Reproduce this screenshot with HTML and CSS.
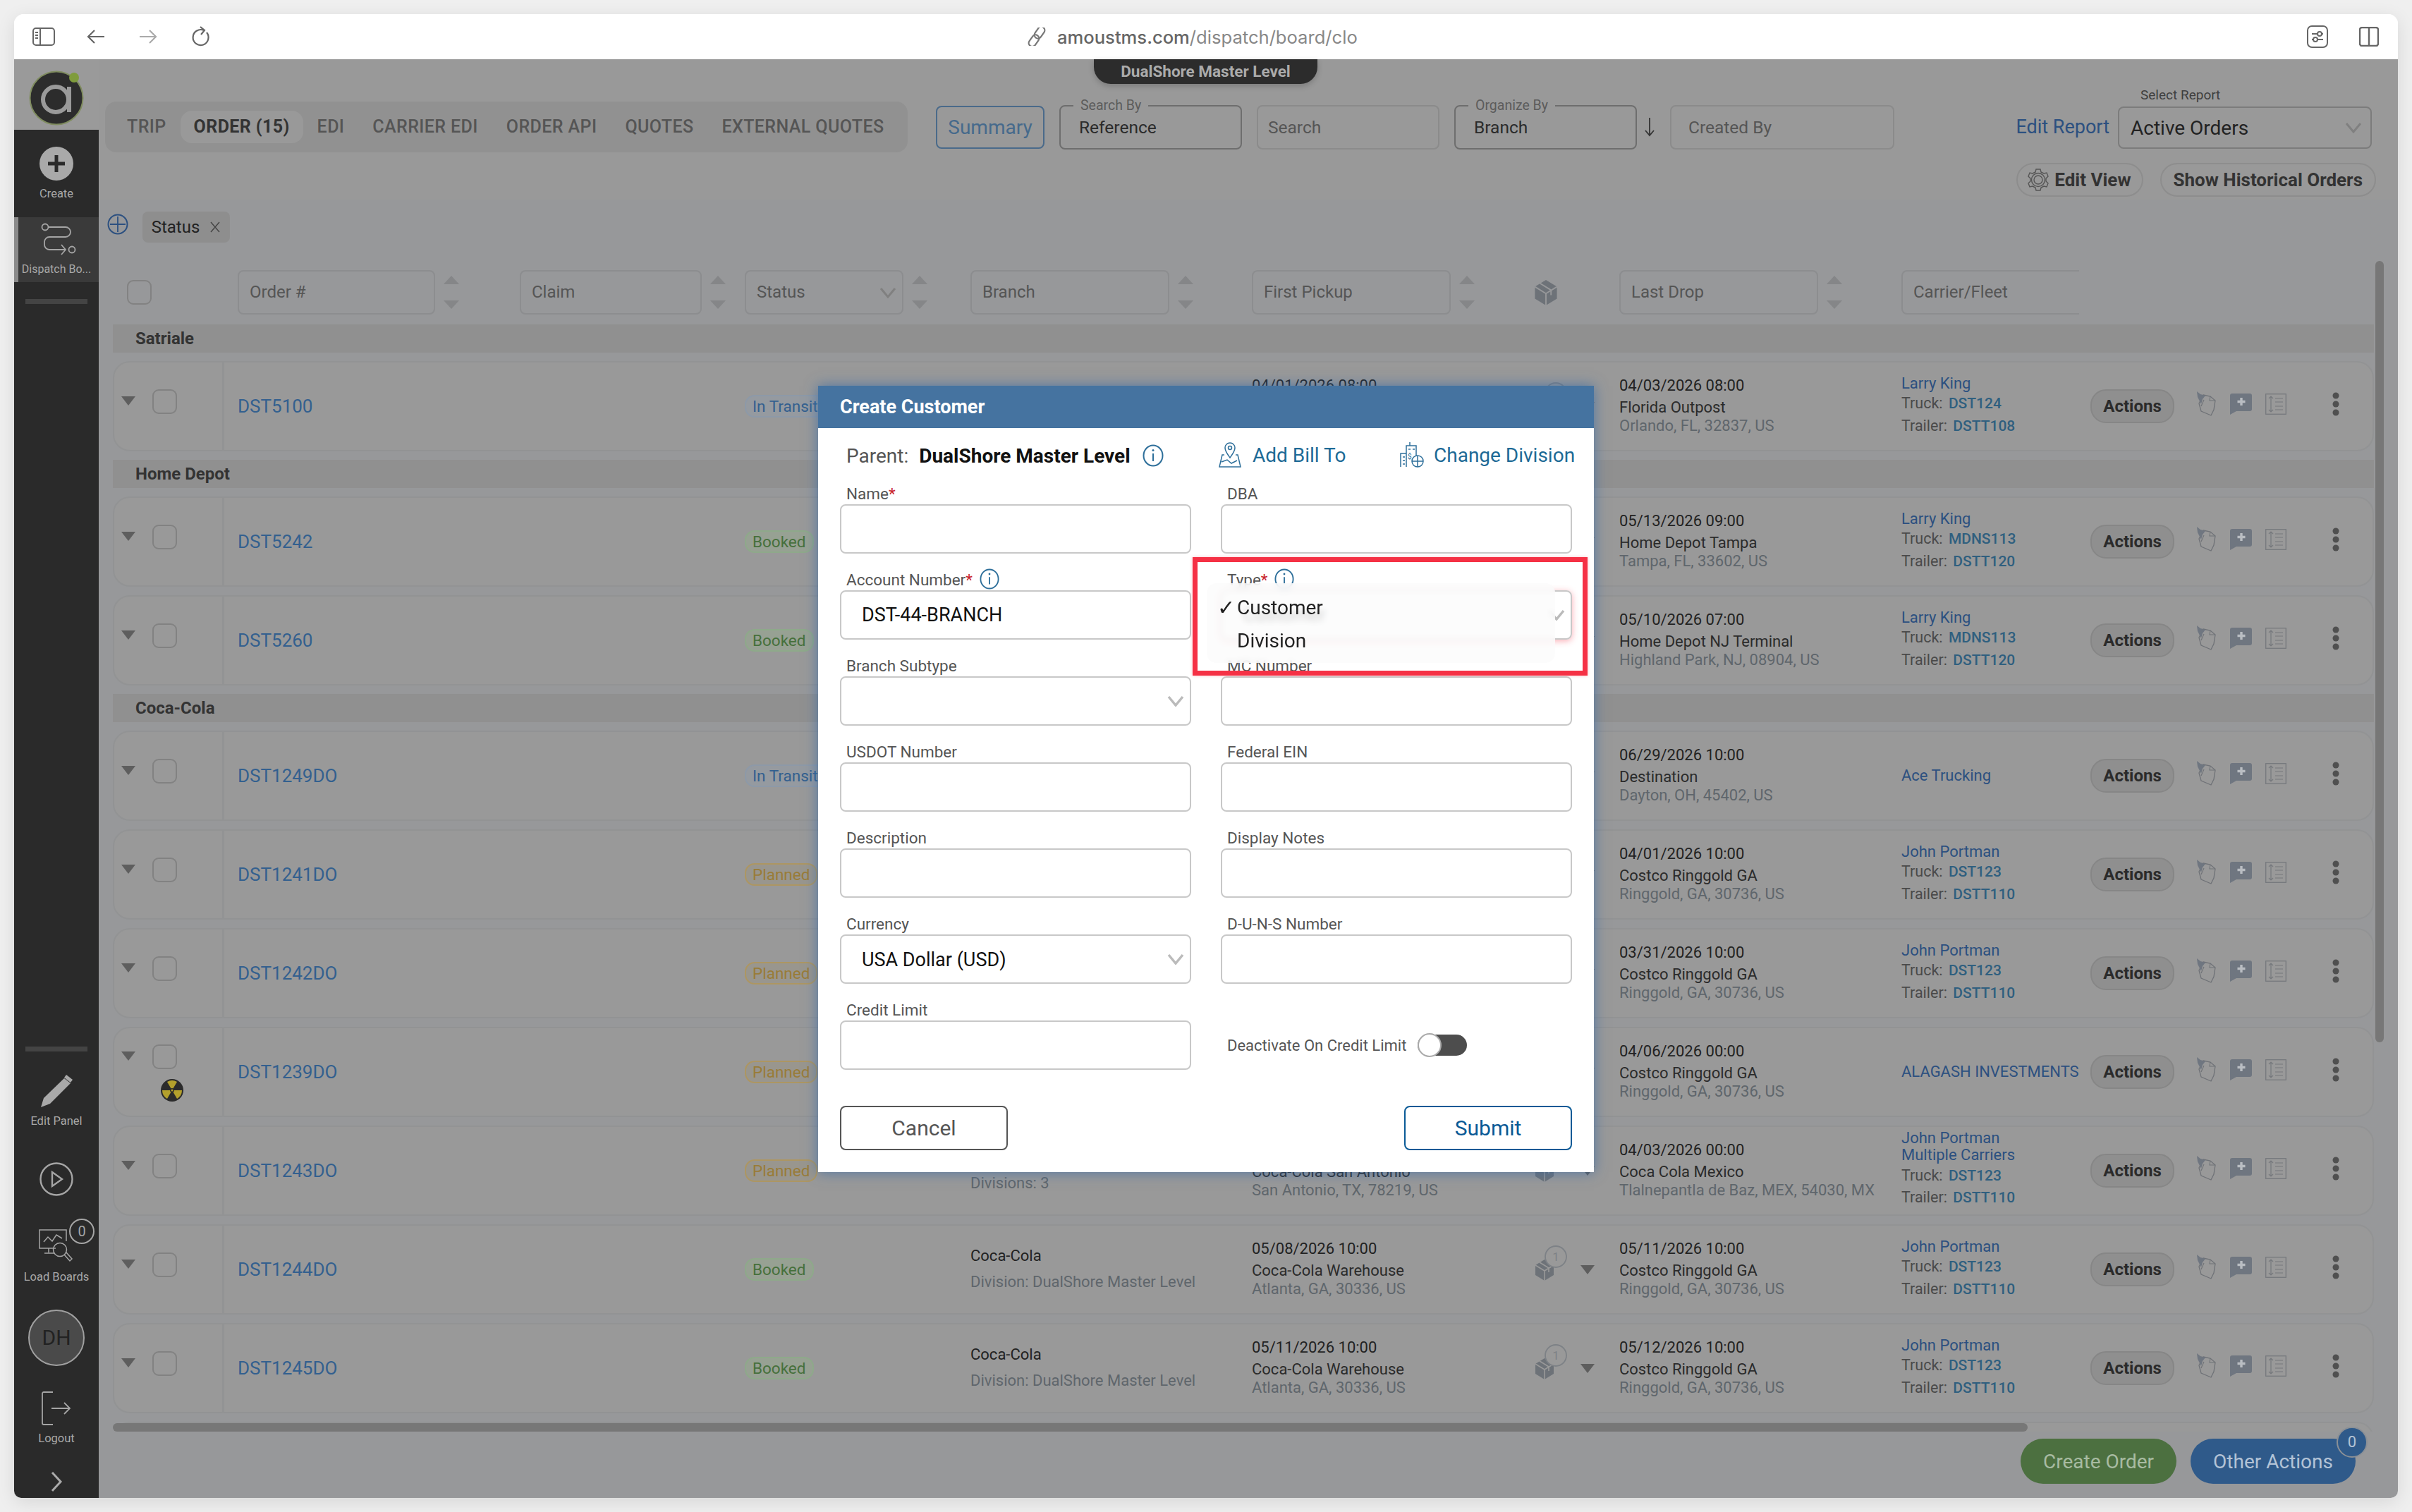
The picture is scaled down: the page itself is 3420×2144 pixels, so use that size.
FILE: index.html
```html
<!DOCTYPE html>
<html lang="en">
<head>
    <meta charset="UTF-8">
    <meta name="viewport" content="width=device-width, initial-scale=1.0">
    <title>Dispatch Board</title>
    <link rel="stylesheet" href="styles.css">
</head>
<body>
    <svg class="icon-defs" xmlns="http://www.w3.org/2000/svg">
        <symbol id="i-info" viewBox="0 0 30 32"><ellipse cx="15" cy="16" rx="13.5" ry="14.5" fill="none" stroke="currentColor" stroke-width="2"/><path d="M15 13v11" stroke="currentColor" stroke-width="2"/><circle cx="15" cy="8.5" r="1.5" fill="currentColor"/></symbol>
        <symbol id="i-pin" viewBox="0 0 28 36"><path d="M10 5l10 2 7 6-2 13-4 8-14-6-3-11z" fill="none" stroke="#6f7277" stroke-width="1.3"/><path d="M20 7l-1 6 8 0" fill="none" stroke="#6f7277" stroke-width="1.1"/><path d="M7 21l4-9" stroke="#6f7277" stroke-width="1.1"/><path d="M1 0l5 4 7 2-4 5-2 7-3-6-2-4z" fill="#6f7680"/></symbol>
        <symbol id="i-chat" viewBox="0 0 31 30"><path d="M3 0h25a3 3 0 0 1 3 3v19a3 3 0 0 1-3 3H9L0 30V3a3 3 0 0 1 3-3z" fill="#6f7680"/><path d="M16 6v11M10.5 11.5h11" stroke="#b9bdc2" stroke-width="3.4"/></symbol>
        <symbol id="i-lines" viewBox="0 0 30 30"><rect x=".7" y=".7" width="28.6" height="28.6" fill="none" stroke="#76797d" stroke-width="1.3"/><path d="M8 4v22M5 7l3-3 3 3M5 23l3 3 3-3M14 7h11M14 12h11M14 18h11M14 23h11" fill="none" stroke="#76797d" stroke-width="1.2"/></symbol>
        <symbol id="i-dots" viewBox="0 0 10 34"><circle cx="5" cy="5" r="4.5" fill="#505050"/><circle cx="5" cy="17" r="4.5" fill="#505050"/><circle cx="5" cy="29" r="4.5" fill="#505050"/></symbol>
        <symbol id="i-stops" viewBox="0 0 48 50"><path d="M1 28l13-8 13 8v14l-13 8-13-8z" fill="#6d7278"/><path d="M1 28l13 8 13-8M14 36v14M7 24l13 8v6" fill="none" stroke="#999" stroke-width="1.6"/><circle cx="30" cy="16" r="15" fill="#999" stroke="#7d8186" stroke-width="1.8"/></symbol>
        <symbol id="i-cube" viewBox="0 0 28 30"><path d="M1 8l13-8 13 8v14l-13 8-13-8z" fill="#6d7278"/><path d="M1 8l13 8 13-8M14 16v14M7 4l13 8v6" fill="none" stroke="#97989a" stroke-width="1.6"/></symbol>
    </svg>

    <div class="window">
        <div class="browser-bar">
            <svg class="bar-icon sidebar-toggle" viewBox="0 0 32 26"><rect x="1" y="1" width="30" height="24" rx="4" fill="none" stroke="#666" stroke-width="2"/><path d="M11 1v24M4 7h4M4 11h4M4 15h4" fill="none" stroke="#666" stroke-width="2"/></svg>
            <svg class="bar-icon nav-back" viewBox="0 0 26 22"><path d="M25 11H2M11 2l-9 9 9 9" fill="none" stroke="#666" stroke-width="2.2"/></svg>
            <svg class="bar-icon nav-fwd" viewBox="0 0 26 22"><path d="M1 11h23M15 2l9 9-9 9" fill="none" stroke="#aaa" stroke-width="2.2"/></svg>
            <svg class="bar-icon nav-reload" viewBox="0 0 26 30"><path d="M17 6a11 11 0 1 0 4 3M12 1l6 5-5 6" fill="none" stroke="#666" stroke-width="2.2"/></svg>
            <div class="address">
                <svg class="link-icon" viewBox="0 0 26 26"><g transform="rotate(-55 13 13)" fill="none" stroke="#777" stroke-width="2.2"><rect x="-3" y="8" width="18" height="10" rx="5"/><rect x="11" y="8" width="18" height="10" rx="5"/></g></svg>
                <span class="address-host">amoustms.com</span><span class="address-path">/dispatch/board/clo</span>
            </div>
            <svg class="bar-icon ext-icon" viewBox="0 0 30 32"><rect x="1" y="1" width="28" height="30" rx="6" fill="none" stroke="#666" stroke-width="2"/><path d="M7 12h16M7 20h16" stroke="#666" stroke-width="2"/><circle cx="18" cy="12" r="3" fill="#fff" stroke="#666" stroke-width="2"/><circle cx="12" cy="20" r="3" fill="#fff" stroke="#666" stroke-width="2"/></svg>
            <svg class="bar-icon split-icon" viewBox="0 0 28 28"><rect x="1" y="1" width="26" height="26" rx="3" fill="none" stroke="#666" stroke-width="2.4"/><path d="M14 1v26" stroke="#666" stroke-width="2.4"/></svg>
        </div>

        <div class="app">
            <aside class="sidebar">
                <div class="logo">
                    <svg viewBox="0 0 80 80" width="80" height="80"><circle cx="40" cy="40" r="37.5" fill="#2c2c2c" stroke="#7f8c5f" stroke-width="2"/><circle cx="39" cy="42" r="18" fill="none" stroke="#9a9a9a" stroke-width="6"/><path d="M58 24v36" stroke="#9a9a9a" stroke-width="6"/><circle cx="65" cy="11" r="7" fill="#7f9c3c"/></svg>
                </div>
                <div class="side-item create-item">
                    <svg viewBox="0 0 48 48" width="48" height="48"><circle cx="24" cy="24" r="24" fill="#a9a9a9"/><path d="M24 12v24M12 24h24" stroke="#2a2a2a" stroke-width="5"/></svg>
                    <span class="side-label">Create</span>
                </div>
                <div class="side-item dispatch-item">
                    <svg viewBox="0 0 50 46" width="50" height="46"><g fill="none" stroke="#a5a5a5" stroke-width="1.8"><circle cx="6" cy="6" r="4.5"/><path d="M11 6h24a7 7 0 0 1 7 7v0a7 7 0 0 1-7 7H12a7 7 0 0 0-7 7v4a7 7 0 0 0 7 7h22M29 31l6 7-6 7"/><circle cx="44" cy="38" r="4.5"/></g></svg>
                    <span class="side-label">Dispatch Bo...</span>
                </div>
                <div class="side-rule"></div>
                <div class="side-bottom">
                    <div class="side-rule"></div>
                    <div class="side-item edit-item">
                        <svg viewBox="0 0 50 50" width="50" height="50"><path d="M36 7l9 7L16 43 3 48l4-13z" fill="#a9a9a9"/><path d="M39 2l9 7-3 4-9-7z" fill="#a9a9a9"/></svg>
                        <span class="side-label">Edit Panel</span>
                    </div>
                    <svg class="play-icon" viewBox="0 0 48 48" width="48" height="48"><circle cx="24" cy="24" r="22.5" fill="none" stroke="#a5a5a5" stroke-width="2.4"/><path d="M18 14l14 10-14 10z" fill="none" stroke="#a5a5a5" stroke-width="2.4"/></svg>
                    <div class="side-item load-item">
                        <svg viewBox="0 0 50 50" width="50" height="50"><g fill="none" stroke="#a5a5a5" stroke-width="1.5"><path d="M24 27H1V1h38v16M14 27v6M8 34h14"/><path d="M7 18l6-7 6 6 6-9 8 5"/><circle cx="30" cy="29" r="9.5"/><path d="M36 36l8 9 3-3-8-9"/></g></svg>
                        <span class="load-badge">0</span>
                        <span class="side-label">Load Boards</span>
                    </div>
                    <div class="avatar">DH</div>
                    <div class="side-item logout-item">
                        <svg viewBox="0 0 42 48" width="42" height="48"><path d="M16 1H3a2 2 0 0 0-2 2v42a2 2 0 0 0 2 2h13M14 24h26M32 16l8 8-8 8" fill="none" stroke="#a5a5a5" stroke-width="1.8"/></svg>
                        <span class="side-label">Logout</span>
                    </div>
                    <svg class="expand-icon" viewBox="0 0 18 30" width="18" height="30"><path d="M3 2l12 13L3 28" fill="none" stroke="#aaa" stroke-width="3"/></svg>
                </div>
            </aside>

            <main class="main">
                <div class="master-pill">DualShore Master Level</div>
                <section class="toolbar">
                    <div class="toolbar-row">
                        <nav class="tabs">
                            <span class="tab">TRIP</span>
                            <span class="tab tab-active">ORDER (15)</span>
                            <span class="tab">EDI</span>
                            <span class="tab">CARRIER EDI</span>
                            <span class="tab">ORDER API</span>
                            <span class="tab">QUOTES</span>
                            <span class="tab">EXTERNAL QUOTES</span>
                        </nav>
                        <button class="summary-btn">Summary</button>
                        <div class="top-field field-dark"><span class="legend">Search By</span>Reference</div>
                        <div class="top-field field-muted">Search</div>
                        <div class="top-field field-dark"><span class="legend">Organize By</span>Branch</div>
                        <svg class="sort-arrow" viewBox="0 0 16 28" width="16" height="28"><path d="M8 1v25M2 19l6 7 6-7" fill="none" stroke="#333" stroke-width="1.8"/></svg>
                        <div class="top-field field-muted created-by">Created By</div>
                        <a class="edit-report">Edit Report</a>
                        <div class="report-select">
                            <span class="report-label">Select Report</span>
                            Active Orders
                            <svg class="report-chevron" viewBox="0 0 24 16" width="24" height="16"><path d="M2 2l10 12L22 2" fill="none" stroke="#808080" stroke-width="3"/></svg>
                        </div>
                    </div>
                    <div class="toolbar-actions">
                        <button class="pill-btn pill-gear">
                            <svg viewBox="0 0 30 32" width="30" height="32"><g fill="none" stroke="#555" stroke-width="1.4"><circle cx="15" cy="16" r="6"/><circle cx="15" cy="16" r="9.5"/><path d="M12 1h6l1 4 4 2 4-1 2 5-3 3v4l3 3-2 5-4-1-4 2-1 4h-6l-1-4-4-2-4 1-2-5 3-3v-4L1 11l2-5 4 1 4-2z"/></g></svg>
                            Edit View
                        </button>
                        <button class="pill-btn">Show Historical Orders</button>
                    </div>
                </section>

                <div class="chip-row">
                    <svg class="add-filter" viewBox="0 0 30 30" width="30" height="30"><circle cx="15" cy="15" r="13.5" fill="none" stroke="#2c5080" stroke-width="2"/><path d="M15 4v22M4 15h22" stroke="#2c5080" stroke-width="1.8"/></svg>
                    <div class="chip">Status <svg viewBox="0 0 16 16" width="16" height="16"><path d="M2 1l12 14M14 1L2 15" stroke="#444" stroke-width="1.4"/></svg></div>
                </div>

                <div class="filter-row">
                    <div class="filter-lead"><span class="checkbox"></span></div>
                    <div class="filter-cell filter-first"><div class="filter-box w-order">Order #</div><span class="sort"></span></div>
                    <div class="filter-cell"><div class="filter-box w-claim">Claim</div><span class="sort"></span></div>
                    <div class="filter-cell"><div class="filter-box w-status">Status<svg class="filter-chevron" viewBox="0 0 24 16" width="24" height="16"><path d="M2 2l10 12L22 2" fill="none" stroke="#808080" stroke-width="3"/></svg></div><span class="sort"></span></div>
                    <div class="filter-cell"><div class="filter-box w-date">Branch</div><span class="sort"></span></div>
                    <div class="filter-cell"><div class="filter-box w-date">First Pickup</div><span class="sort"></span></div>
                    <div class="filter-cell filter-cube"><svg width="34" height="36"><use href="#i-cube"/></svg></div>
                    <div class="filter-cell"><div class="filter-box w-date">Last Drop</div><span class="sort"></span></div>
                    <div class="filter-cell"><div class="filter-box w-carrier">Carrier/Fleet</div></div>
                </div>

                <div class="list">
                    <div class="group">Satriale</div>

                    <div class="row">
                        <div class="lead"><span class="caret"></span><span class="checkbox"></span></div>
                        <div class="order"><a class="order-link">DST5100</a></div><div></div>
                        <div class="cell-center"><span class="badge badge-transit">In Transit</span></div>
                        <div class="customer"></div>
                        <div class="stop"><div class="stop-date">04/01/2026 08:00</div></div>
                        <div class="stops"><svg class="stops-icon"><use href="#i-stops"/></svg><span class="stops-count">1</span><span class="caret"></span></div>
                        <div class="stop"><div class="stop-date">04/03/2026 08:00</div><div class="stop-name">Florida Outpost</div><div class="stop-addr">Orlando, FL, 32837, US</div></div>
                        <div class="carrier"><a class="carrier-name">Larry King</a><div class="carrier-line">Truck: <b>DST124</b></div><div class="carrier-line trailer">Trailer: <b>DSTT108</b></div></div>
                        <div class="actions"><button class="actions-btn">Actions</button><svg class="ic-pin"><use href="#i-pin"/></svg><svg class="ic-chat"><use href="#i-chat"/></svg><svg class="ic-lines"><use href="#i-lines"/></svg><svg class="ic-dots"><use href="#i-dots"/></svg></div>
                    </div>

                    <div class="group">Home Depot</div>

                    <div class="row">
                        <div class="lead"><span class="caret"></span><span class="checkbox"></span></div>
                        <div class="order"><a class="order-link">DST5242</a></div><div></div>
                        <div class="cell-center"><span class="badge badge-booked">Booked</span></div>
                        <div class="customer"></div><div class="stop"></div>
                        <div class="stops"><svg class="stops-icon"><use href="#i-stops"/></svg><span class="stops-count">1</span><span class="caret"></span></div>
                        <div class="stop"><div class="stop-date">05/13/2026 09:00</div><div class="stop-name">Home Depot Tampa</div><div class="stop-addr">Tampa, FL, 33602, US</div></div>
                        <div class="carrier"><a class="carrier-name">Larry King</a><div class="carrier-line">Truck: <b>MDNS113</b></div><div class="carrier-line trailer">Trailer: <b>DSTT120</b></div></div>
                        <div class="actions"><button class="actions-btn">Actions</button><svg class="ic-pin"><use href="#i-pin"/></svg><svg class="ic-chat"><use href="#i-chat"/></svg><svg class="ic-lines"><use href="#i-lines"/></svg><svg class="ic-dots"><use href="#i-dots"/></svg></div>
                    </div>

                    <div class="row">
                        <div class="lead"><span class="caret"></span><span class="checkbox"></span></div>
                        <div class="order"><a class="order-link">DST5260</a></div><div></div>
                        <div class="cell-center"><span class="badge badge-booked">Booked</span></div>
                        <div class="customer"></div><div class="stop"></div>
                        <div class="stops"><svg class="stops-icon"><use href="#i-stops"/></svg><span class="stops-count">1</span><span class="caret"></span></div>
                        <div class="stop"><div class="stop-date">05/10/2026 07:00</div><div class="stop-name">Home Depot NJ Terminal</div><div class="stop-addr">Highland Park, NJ, 08904, US</div></div>
                        <div class="carrier"><a class="carrier-name">Larry King</a><div class="carrier-line">Truck: <b>MDNS113</b></div><div class="carrier-line trailer">Trailer: <b>DSTT120</b></div></div>
                        <div class="actions"><button class="actions-btn">Actions</button><svg class="ic-pin"><use href="#i-pin"/></svg><svg class="ic-chat"><use href="#i-chat"/></svg><svg class="ic-lines"><use href="#i-lines"/></svg><svg class="ic-dots"><use href="#i-dots"/></svg></div>
                    </div>

                    <div class="group">Coca-Cola</div>

                    <div class="row">
                        <div class="lead"><span class="caret"></span><span class="checkbox"></span></div>
                        <div class="order"><a class="order-link">DST1249DO</a></div><div></div>
                        <div class="cell-center"><span class="badge badge-transit">In Transit</span></div>
                        <div class="customer"></div><div class="stop"></div>
                        <div class="stops"><svg class="stops-icon"><use href="#i-stops"/></svg><span class="stops-count">1</span><span class="caret"></span></div>
                        <div class="stop"><div class="stop-date">06/29/2026 10:00</div><div class="stop-name">Destination</div><div class="stop-addr">Dayton, OH, 45402, US</div></div>
                        <div class="carrier carrier-single"><a class="carrier-name">Ace Trucking</a></div>
                        <div class="actions"><button class="actions-btn">Actions</button><svg class="ic-pin"><use href="#i-pin"/></svg><svg class="ic-chat"><use href="#i-chat"/></svg><svg class="ic-lines"><use href="#i-lines"/></svg><svg class="ic-dots"><use href="#i-dots"/></svg></div>
                    </div>

                    <div class="row">
                        <div class="lead"><span class="caret"></span><span class="checkbox"></span></div>
                        <div class="order"><a class="order-link">DST1241DO</a></div><div></div>
                        <div class="cell-center"><span class="badge badge-planned">Planned</span></div>
                        <div class="customer"></div><div class="stop"></div>
                        <div class="stops"><svg class="stops-icon"><use href="#i-stops"/></svg><span class="stops-count">1</span><span class="caret"></span></div>
                        <div class="stop"><div class="stop-date">04/01/2026 10:00</div><div class="stop-name">Costco Ringgold GA</div><div class="stop-addr">Ringgold, GA, 30736, US</div></div>
                        <div class="carrier"><a class="carrier-name">John Portman</a><div class="carrier-line">Truck: <b>DST123</b></div><div class="carrier-line trailer">Trailer: <b>DSTT110</b></div></div>
                        <div class="actions"><button class="actions-btn">Actions</button><svg class="ic-pin"><use href="#i-pin"/></svg><svg class="ic-chat"><use href="#i-chat"/></svg><svg class="ic-lines"><use href="#i-lines"/></svg><svg class="ic-dots"><use href="#i-dots"/></svg></div>
                    </div>

                    <div class="row">
                        <div class="lead"><span class="caret"></span><span class="checkbox"></span></div>
                        <div class="order"><a class="order-link">DST1242DO</a></div><div></div>
                        <div class="cell-center"><span class="badge badge-planned">Planned</span></div>
                        <div class="customer"></div><div class="stop"></div>
                        <div class="stops"><svg class="stops-icon"><use href="#i-stops"/></svg><span class="stops-count">1</span><span class="caret"></span></div>
                        <div class="stop"><div class="stop-date">03/31/2026 10:00</div><div class="stop-name">Costco Ringgold GA</div><div class="stop-addr">Ringgold, GA, 30736, US</div></div>
                        <div class="carrier"><a class="carrier-name">John Portman</a><div class="carrier-line">Truck: <b>DST123</b></div><div class="carrier-line trailer">Trailer: <b>DSTT110</b></div></div>
                        <div class="actions"><button class="actions-btn">Actions</button><svg class="ic-pin"><use href="#i-pin"/></svg><svg class="ic-chat"><use href="#i-chat"/></svg><svg class="ic-lines"><use href="#i-lines"/></svg><svg class="ic-dots"><use href="#i-dots"/></svg></div>
                    </div>

                    <div class="row">
                        <div class="lead lead-hazard"><span class="caret"></span><span class="checkbox"></span>
                            <svg class="hazard" viewBox="0 0 32 32"><circle cx="16" cy="16" r="16" fill="#2b2b2b"/><g fill="#b3a02c"><path d="M16 16L9 4a14 14 0 0 1 14 0z"/><path d="M16 16l14 0a14 14 0 0 1-7 12z"/><path d="M16 16L2 16a14 14 0 0 0 7 12z"/></g><circle cx="16" cy="16" r="3" fill="#2b2b2b"/><circle cx="16" cy="16" r="1.5" fill="#b3a02c"/></svg>
                        </div>
                        <div class="order"><a class="order-link">DST1239DO</a></div><div></div>
                        <div class="cell-center"><span class="badge badge-planned">Planned</span></div>
                        <div class="customer"></div><div class="stop"></div>
                        <div class="stops"><svg class="stops-icon"><use href="#i-stops"/></svg><span class="stops-count">1</span><span class="caret"></span></div>
                        <div class="stop"><div class="stop-date">04/06/2026 00:00</div><div class="stop-name">Costco Ringgold GA</div><div class="stop-addr">Ringgold, GA, 30736, US</div></div>
                        <div class="carrier carrier-single"><a class="carrier-name">ALAGASH INVESTMENTS</a></div>
                        <div class="actions"><button class="actions-btn">Actions</button><svg class="ic-pin"><use href="#i-pin"/></svg><svg class="ic-chat"><use href="#i-chat"/></svg><svg class="ic-lines"><use href="#i-lines"/></svg><svg class="ic-dots"><use href="#i-dots"/></svg></div>
                    </div>

                    <div class="row">
                        <div class="lead"><span class="caret"></span><span class="checkbox"></span></div>
                        <div class="order"><a class="order-link">DST1243DO</a></div><div></div>
                        <div class="cell-center"><span class="badge badge-planned">Planned</span></div>
                        <div class="customer"><div class="customer-name">Coca-Cola</div><div class="customer-sub">Divisions: 3</div></div>
                        <div class="stop"><div class="stop-date">&nbsp;</div><div class="stop-name">Coca-Cola San Antonio</div><div class="stop-addr">San Antonio, TX, 78219, US</div></div>
                        <div class="stops"><svg class="stops-icon"><use href="#i-stops"/></svg><span class="stops-count">1</span><span class="caret"></span></div>
                        <div class="stop"><div class="stop-date">04/03/2026 00:00</div><div class="stop-name">Coca Cola Mexico</div><div class="stop-addr">Tlalnepantla de Baz, MEX, 54030, MX</div></div>
                        <div class="carrier carrier-four"><a class="carrier-name">John Portman</a><a class="carrier-name">Multiple Carriers</a><div class="carrier-line">Truck: <b>DST123</b></div><div class="carrier-line trailer">Trailer: <b>DSTT110</b></div></div>
                        <div class="actions"><button class="actions-btn">Actions</button><svg class="ic-pin"><use href="#i-pin"/></svg><svg class="ic-chat"><use href="#i-chat"/></svg><svg class="ic-lines"><use href="#i-lines"/></svg><svg class="ic-dots"><use href="#i-dots"/></svg></div>
                    </div>

                    <div class="row">
                        <div class="lead"><span class="caret"></span><span class="checkbox"></span></div>
                        <div class="order"><a class="order-link">DST1244DO</a></div><div></div>
                        <div class="cell-center"><span class="badge badge-booked">Booked</span></div>
                        <div class="customer"><div class="customer-name">Coca-Cola</div><div class="customer-sub">Division: DualShore Master Level</div></div>
                        <div class="stop"><div class="stop-date">05/08/2026 10:00</div><div class="stop-name">Coca-Cola Warehouse</div><div class="stop-addr">Atlanta, GA, 30336, US</div></div>
                        <div class="stops"><svg class="stops-icon"><use href="#i-stops"/></svg><span class="stops-count">1</span><span class="caret"></span></div>
                        <div class="stop"><div class="stop-date">05/11/2026 10:00</div><div class="stop-name">Costco Ringgold GA</div><div class="stop-addr">Ringgold, GA, 30736, US</div></div>
                        <div class="carrier"><a class="carrier-name">John Portman</a><div class="carrier-line">Truck: <b>DST123</b></div><div class="carrier-line trailer">Trailer: <b>DSTT110</b></div></div>
                        <div class="actions"><button class="actions-btn">Actions</button><svg class="ic-pin"><use href="#i-pin"/></svg><svg class="ic-chat"><use href="#i-chat"/></svg><svg class="ic-lines"><use href="#i-lines"/></svg><svg class="ic-dots"><use href="#i-dots"/></svg></div>
                    </div>

                    <div class="row">
                        <div class="lead"><span class="caret"></span><span class="checkbox"></span></div>
                        <div class="order"><a class="order-link">DST1245DO</a></div><div></div>
                        <div class="cell-center"><span class="badge badge-booked">Booked</span></div>
                        <div class="customer"><div class="customer-name">Coca-Cola</div><div class="customer-sub">Division: DualShore Master Level</div></div>
                        <div class="stop"><div class="stop-date">05/11/2026 10:00</div><div class="stop-name">Coca-Cola Warehouse</div><div class="stop-addr">Atlanta, GA, 30336, US</div></div>
                        <div class="stops"><svg class="stops-icon"><use href="#i-stops"/></svg><span class="stops-count">1</span><span class="caret"></span></div>
                        <div class="stop"><div class="stop-date">05/12/2026 10:00</div><div class="stop-name">Costco Ringgold GA</div><div class="stop-addr">Ringgold, GA, 30736, US</div></div>
                        <div class="carrier"><a class="carrier-name">John Portman</a><div class="carrier-line">Truck: <b>DST123</b></div><div class="carrier-line trailer">Trailer: <b>DSTT110</b></div></div>
                        <div class="actions"><button class="actions-btn">Actions</button><svg class="ic-pin"><use href="#i-pin"/></svg><svg class="ic-chat"><use href="#i-chat"/></svg><svg class="ic-lines"><use href="#i-lines"/></svg><svg class="ic-dots"><use href="#i-dots"/></svg></div>
                    </div>

                    <div class="row"></div>
                </div>

                <div class="scroll-x"></div>
                <div class="scroll-y"></div>

                <div class="bottom-bar">
                    <button class="cta cta-green">Create Order</button>
                    <div class="cta-wrap">
                        <button class="cta cta-blue">Other Actions</button>
                        <span class="cta-badge">0</span>
                    </div>
                </div>
            </main>
        </div>

        <div class="modal">
            <div class="modal-head">Create Customer</div>
            <div class="modal-parent">
                <span class="parent-label">Parent:</span>
                <strong class="parent-name">DualShore Master Level</strong>
                <svg class="info parent-info"><use href="#i-info"/></svg>
                <a class="modal-link link-bill">
                    <svg viewBox="0 0 32 36" width="32" height="36"><g fill="none" stroke="#2e6f9a" stroke-width="1.5"><path d="M16 22c-4-6-7-9-7-14a7 7 0 0 1 14 0c0 5-3 8-7 14z"/><circle cx="16" cy="8" r="2.5"/><path d="M8 18H5L1 35h30l-4-17h-3M4 28l8-3 6 5 8-4"/></g></svg>
                    Add Bill To
                </a>
                <a class="modal-link link-division">
                    <svg viewBox="0 0 34 36" width="34" height="36"><g fill="none" stroke="#2e6f9a" stroke-width="1.5"><path d="M1 35V16h8M9 35V5h14v14M14 0v5M4 21h3M4 26h3M4 31h3M12 10h3M18 10h3"/><circle cx="25" cy="27" r="8"/><path d="M17 27h16M25 19v16"/></g><text x="11" y="24" font-family="Roboto" font-size="10" fill="#2e6f9a">$</text></svg>
                    Change Division
                </a>
            </div>
            <form class="modal-form">
                <div class="form-field"><label>Name<i>*</i></label><div class="input"></div></div>
                <div class="form-field"><label>DBA</label><div class="input"></div></div>
                <div class="form-field"><label>Account Number<i>*</i> <svg class="info"><use href="#i-info"/></svg></label><div class="input">DST-44-BRANCH</div></div>
                <div class="form-field"><label>Type<i>*</i> <svg class="info"><use href="#i-info"/></svg></label><div class="input input-type">Customer<svg class="chevron" viewBox="0 0 24 16"><path d="M2 2l10 12L22 2" fill="none" stroke="#bbb" stroke-width="3.5"/></svg></div></div>
                <div class="form-field"><label>Branch Subtype</label><div class="input"><svg class="chevron" viewBox="0 0 24 16"><path d="M2 2l10 12L22 2" fill="none" stroke="#bbb" stroke-width="3.5"/></svg></div></div>
                <div class="form-field"><label>MC Number</label><div class="input"></div></div>
                <div class="form-field"><label>USDOT Number</label><div class="input"></div></div>
                <div class="form-field"><label>Federal EIN</label><div class="input"></div></div>
                <div class="form-field"><label>Description</label><div class="input"></div></div>
                <div class="form-field"><label>Display Notes</label><div class="input"></div></div>
                <div class="form-field"><label>Currency</label><div class="input input-currency">USA Dollar (USD)<svg class="chevron" viewBox="0 0 24 16"><path d="M2 2l10 12L22 2" fill="none" stroke="#bbb" stroke-width="3.5"/></svg></div></div>
                <div class="form-field"><label>D-U-N-S Number</label><div class="input"></div></div>
                <div class="form-field"><label>Credit Limit</label><div class="input"></div></div>
                <div class="toggle-field"><span>Deactivate On Credit Limit</span><span class="toggle"><span class="toggle-knob"></span></span></div>
            </form>
            <div class="modal-buttons">
                <button class="modal-btn btn-cancel">Cancel</button>
                <button class="modal-btn btn-submit">Submit</button>
            </div>
            <div class="type-menu">
                <div class="menu-item"><span class="menu-check">✓</span>Customer</div>
                <div class="menu-item"><span class="menu-check"></span>Division</div>
            </div>
            <div class="red-frame"></div>
        </div>
    </div>
</body>
</html>
```

FILE: styles.css
```css
:root {
    --top-bg: #999999;
    --main-bg: #97989a;
    --group-bg: #909090;
    --row-line: #929394;
    --link-blue: #33608f;
    --name-blue: #2c5080;
    --value-teal: #2f5f7f;
    --grid-cols: 158px 419px 319px 320px 399px 395px 126px 400px 268px 1fr;
    --row-cols: 156px 419px 319px 320px 399px 395px 126px 400px 268px 1fr;
}
* { box-sizing: border-box; }
body, html { margin: 0; padding: 0; background: #efefef; font-family: Roboto, 'Liberation Sans', sans-serif; }
body { padding: 20px 20px 20px; height: 2144px; overflow: hidden; }
button { font-family: inherit; }
.icon-defs { position: absolute; width: 0; height: 0; }

.window { position: relative; width: 3380px; height: 2104px; border-radius: 14px 14px 10px 10px; overflow: hidden; background: #fff; box-shadow: 0 6px 26px rgba(0, 0, 0, 0.1); display: flex; flex-direction: column; }

/* browser chrome */
.browser-bar { height: 64px; background: #fff; display: flex; align-items: center; flex: none; }
.bar-icon { display: block; flex: none; }
.sidebar-toggle { width: 32px; height: 26px; margin-left: 26px; }
.nav-back { width: 26px; height: 22px; margin-left: 45px; }
.nav-fwd { width: 26px; height: 22px; margin-left: 48px; }
.nav-reload { width: 26px; height: 30px; margin-left: 49px; }
.address { display: flex; align-items: center; margin-left: 1159px; font-family: Inter, sans-serif; font-size: 25.6px; white-space: nowrap; }
.link-icon { width: 26px; height: 26px; margin-right: 16px; }
.address-host { color: #666; font-weight: 500; }
.address-path { color: #888; }
.ext-icon { width: 30px; height: 32px; margin-left: auto; }
.split-icon { width: 28px; height: 28px; margin-left: 44px; margin-right: 27px; }

.app { flex: 1; display: flex; min-height: 0; }

/* sidebar */
.sidebar { width: 120px; flex: none; background: #2a2a2a; display: flex; flex-direction: column; align-items: center; }
.logo { width: 100%; height: 100px; background: #9a9a9a; display: flex; align-items: center; justify-content: center; padding-top: 9px; }
.side-item { position: relative; display: flex; flex-direction: column; align-items: center; width: 100%; }
.side-label { font-size: 16.5px; line-height: 22px; color: #a8a8a8; white-space: nowrap; }
.create-item { height: 124px; padding-top: 24px; gap: 8px; }
.dispatch-item { height: 92px; padding-top: 8px; gap: 9px; background: #3a3a3a; border-left: 6px solid #8a8a8a; }
.dispatch-item .side-label { font-size: 16px; margin-left: -6px; }
.side-rule { width: 88px; height: 7px; background: #444; margin-top: 24px; flex: none; }
.side-bottom { margin-top: auto; width: 100%; display: flex; flex-direction: column; align-items: center; padding-bottom: 8px; }
.side-bottom .side-rule { margin-top: 0; }
.edit-item { margin-top: 31px; gap: 7px; }
.play-icon { margin-top: 47px; flex: none; }
.load-item { margin-top: 47px; gap: 7px; }
.load-badge { position: absolute; top: -15px; left: 78px; width: 36px; height: 36px; border: 2px solid #a5a5a5; border-radius: 50%; font-size: 20px; line-height: 32px; text-align: center; color: #a5a5a5; }
.avatar { margin-top: 35px; width: 80px; height: 80px; border-radius: 50%; flex: none; background: #4a4a4a; border: 2px solid #a0a0a0; color: #222; font-size: 30px; line-height: 76px; text-align: center; }
.logout-item { margin-top: 36px; gap: 8px; }
.expand-icon { margin-top: 35px; flex: none; }

/* main */
.main { position: relative; flex: 1; min-width: 0; background: var(--main-bg); display: flex; flex-direction: column; }
.master-pill { position: absolute; left: 1411px; top: 0; width: 317px; height: 35px; background: #2c2c2c; color: #ababab; border-radius: 0 0 24px 24px; font-size: 22.5px; font-weight: 700; line-height: 35px; text-align: center; box-shadow: 0 3px 8px rgba(0, 0, 0, 0.2); }
.toolbar { height: 199px; flex: none; background: var(--top-bg); padding-top: 60px; }
.toolbar-row { height: 72px; display: flex; align-items: center; padding: 0 37px 0 9px; }
.tabs { width: 1138px; height: 72px; background: #919191; border-radius: 16px; display: flex; align-items: center; padding: 0 10px 0 11px; flex: none; }
.tab { padding: 0 20px; height: 46px; line-height: 46px; font-size: 25px; font-weight: 500; letter-spacing: 0.4px; color: #555; white-space: nowrap; border-radius: 16px; }
.tab-active { background: #999; color: #333; font-weight: 700; padding: 0 19px; }
.summary-btn { margin-left: 40px; width: 154px; height: 61px; background: transparent; border: 2px solid #4a6a8a; border-radius: 8px; color: #466a8c; font-size: 28px; padding: 0; flex: none; }
.top-field { position: relative; width: 259px; height: 63px; border-radius: 8px; margin-left: 21px; padding-left: 26px; font-size: 24.5px; line-height: 60px; flex: none; }
.field-dark { border: 2px solid #6e6e6e; color: #2b2b2b; }
.field-muted { border: 2px solid #8b8b8b; color: #555; padding-left: 14px; }
.legend { position: absolute; left: 18px; top: -12px; padding: 0 10px 0 10px; background: var(--top-bg); font-size: 19.5px; line-height: 22px; color: #5c5c5c; }
.sort-arrow { margin-left: 10px; flex: none; }
.created-by { width: 318px; margin-left: 21px; padding-left: 24px; }
.edit-report { margin-left: auto; color: var(--name-blue); font-size: 27px; white-space: nowrap; }
.report-select { position: relative; width: 360px; height: 60px; margin-left: 12px; margin-top: 2px; border: 2px solid #7c7c7c; border-radius: 8px; padding-left: 16px; font-size: 28px; line-height: 58px; color: #222; flex: none; }
.report-label { position: absolute; left: 30px; top: -30px; font-size: 19px; line-height: 24px; color: #3f3f3f; white-space: nowrap; }
.report-chevron { position: absolute; right: 12px; top: 20px; }
.toolbar-actions { display: flex; justify-content: flex-end; gap: 24px; padding-right: 31px; margin-top: 15px; }
.pill-btn { height: 48px; padding: 0 17px; display: flex; align-items: center; gap: 8px; background: transparent; border: 2px solid #8d8d8d; border-radius: 24px; font-size: 26px; font-weight: 700; color: #333; }
.pill-gear { padding: 0 15px 0 14px; }

.chip-row { height: 100px; flex: none; display: flex; align-items: center; padding-left: 12px; gap: 20px; }
.add-filter { margin-top: -30px; flex: none; }
.chip { height: 44px; width: 124px; margin-top: -22px; background: #8e8e8e; border-radius: 8px; display: flex; align-items: center; justify-content: center; gap: 14px; font-size: 24px; color: #222; }

.filter-row { height: 63px; flex: none; display: grid; grid-template-columns: var(--grid-cols); padding-left: 20px; padding-right: 34px; }
.filter-lead { padding: 14px 0 0 20px; }
.filter-cell { display: flex; align-items: center; gap: 12px; }
.filter-first { padding-left: 19px; }
.filter-cube { padding-left: 5px; }
.filter-box { position: relative; height: 63px; border: 2px solid #8c8d8f; border-radius: 8px; padding-left: 15px; font-size: 24px; line-height: 59px; color: #555; flex: none; }
.w-order { width: 280px; }
.w-claim { width: 258px; }
.w-status { width: 225px; }
.w-date { width: 282px; }
.w-carrier { width: 252px; border-right: none; border-radius: 8px 0 0 8px; }
.filter-chevron { position: absolute; right: 8px; top: 22px; }
.sort { position: relative; width: 23px; height: 47px; flex: none; }
.sort::before, .sort::after { content: ""; position: absolute; left: 0; border-left: 11.5px solid transparent; border-right: 11.5px solid transparent; }
.sort::before { top: 0; border-bottom: 12px solid #858688; }
.sort::after { bottom: 0; border-top: 12px solid #858688; }
.checkbox { display: block; width: 35px; height: 35px; border: 2px solid #828282; border-radius: 9px; flex: none; }

/* rows */
.list { height: 1570px; margin-top: 14px; margin-left: 20px; margin-right: 34px; overflow: hidden; display: flex; flex-direction: column; gap: 12px; flex: none; }
.group { height: 40px; flex: none; background: var(--group-bg); padding-left: 32px; font-size: 24px; font-weight: 700; line-height: 40px; color: #333; }
.row { height: 128px; flex: none; display: grid; grid-template-columns: var(--row-cols); background: var(--top-bg); border: 2px solid var(--row-line); border-radius: 24px; align-items: stretch; }
.lead { display: flex; gap: 24px; padding: 38px 0 0 10px; border-right: 3px solid var(--row-line); position: relative; }
.lead .caret { margin-top: 10px; }
.lead-hazard { padding-top: 23px; }
.hazard { position: absolute; left: 66px; top: 72px; width: 32px; height: 32px; }
.caret { width: 0; height: 0; border-left: 10px solid transparent; border-right: 10px solid transparent; border-top: 13px solid #5e5e5e; flex: none; display: block; }
.order { display: flex; align-items: center; padding-left: 19px; }
.order-link { color: var(--link-blue); font-size: 26px; }
.cell-center { display: flex; align-items: center; }
.badge { height: 32px; padding: 0 9px; border-radius: 14px; font-size: 22.5px; line-height: 29px; white-space: nowrap; border: 2px solid; }
.badge-booked { color: #46703c; border-color: #8ea98a; background: #97a193; }
.badge-transit { color: var(--link-blue); border-color: #8d99a8; background: #959aa0; }
.badge-planned { color: #997c38; border-color: #ad9662; background: #99968e; }
.customer { padding-top: 29px; }
.customer-name { font-size: 22px; line-height: 28px; color: #222; }
.customer-sub { font-size: 22px; line-height: 28px; margin-top: 9px; color: #5f666c; white-space: nowrap; }
.stop { padding-top: 19px; white-space: nowrap; }
.stop-date { font-size: 22px; line-height: 28px; color: #222; }
.stop-name { font-size: 22px; line-height: 26px; margin-top: 4px; color: #2b2b2b; }
.stop-addr { font-size: 22px; line-height: 26px; color: #5f666c; }
.stops { position: relative; display: flex; align-items: center; padding-left: 6px; gap: 17px; }
.stops-icon { width: 48px; height: 50px; margin-top: -18px; flex: none; }
.stops-count { position: absolute; left: 31px; top: 34px; width: 10px; font-size: 17px; line-height: 20px; text-align: center; color: #7d8186; }
.carrier { padding-top: 16px; white-space: nowrap; }
.carrier-single { padding-top: 0; display: flex; align-items: center; }
.carrier-name { display: block; font-size: 22px; line-height: 28px; color: var(--name-blue); }
.carrier-line { font-size: 21.5px; line-height: 28px; color: #4a4a4a; }
.carrier-line b { font-weight: 500; font-size: 21px; color: var(--value-teal); margin-left: 3px; }
.trailer { margin-top: 4px; }
.carrier-four { padding-top: 4px; }
.carrier-four .carrier-name { line-height: 24px; }
.carrier-four .carrier-line { margin-top: 3px; }
.actions { display: flex; align-items: center; }
.actions-btn { width: 119px; height: 48px; background: #8f8f8f; border: 2px solid #868686; border-radius: 22px; font-size: 24px; font-weight: 700; color: #2b2b2b; padding: 0; flex: none; }
.ic-pin { width: 28px; height: 36px; margin-left: 31px; margin-top: -6px; flex: none; }
.ic-chat { width: 31px; height: 30px; margin-left: 20px; margin-top: -6px; flex: none; }
.ic-lines { width: 30px; height: 30px; margin-left: 19px; margin-top: -6px; flex: none; }
.ic-dots { width: 10px; height: 34px; margin-left: 65px; margin-top: -6px; flex: none; }

.scroll-x { position: absolute; left: 20px; top: 1934px; width: 2715px; height: 12px; background: #777; border-radius: 6px; }
.scroll-y { position: absolute; left: 3228px; top: 286px; width: 12px; height: 1108px; background: #777; border-radius: 6px; }

.bottom-bar { flex: 1; display: flex; justify-content: flex-end; gap: 20px; padding: 10px 60px 0 0; }
.cta { height: 64px; border: none; border-radius: 32px; font-size: 28px; padding: 0; }
.cta-green { width: 221px; background: #4c7040; color: #a8bba2; }
.cta-wrap { position: relative; }
.cta-blue { width: 234px; background: #2f5a8a; color: #b3c3d6; }
.cta-badge { position: absolute; right: -17px; top: -17px; width: 44px; height: 44px; border-radius: 50%; background: #2f5a8a; border: 2px solid #8b9096; color: #b3c3d6; font-size: 22px; line-height: 40px; text-align: center; }

/* modal */
.modal { position: absolute; left: 1140px; top: 527px; width: 1100px; height: 1115px; background: #fff; box-shadow: 0 0 18px rgba(55, 105, 165, 0.75); }
.modal-head { height: 60px; background: #4573a0; color: #fff; font-size: 27px; font-weight: 700; line-height: 60px; padding-left: 31px; }
.modal-parent { position: relative; height: 78px; display: flex; align-items: center; padding-left: 40px; font-size: 28px; }
.parent-label { color: #555; }
.parent-name { margin-left: 15px; color: #111; font-weight: 700; }
.info { display: inline-block; width: 30px; height: 32px; color: #2e6f9a; vertical-align: middle; }
.parent-info { margin-left: 17px; flex: none; }
.modal-link { position: absolute; top: 20px; display: flex; align-items: center; gap: 16px; color: #1d6a96; font-size: 28px; white-space: nowrap; }
.link-bill { left: 568px; }
.link-division { left: 825px; gap: 14px; }
.modal-form { display: grid; grid-template-columns: 498px 498px; column-gap: 42px; padding: 0 31px; }
.form-field { height: 122px; }
.form-field label { display: block; height: 30px; padding-left: 9px; font-size: 22.5px; line-height: 30px; color: #555; white-space: nowrap; }
.form-field label i { font-style: normal; color: #c8232c; }
.form-field label .info { width: 28px; height: 30px; margin: -6px 0 0 4px; }
.input { position: relative; height: 70px; border: 2px solid #c8c8c8; border-radius: 8px; padding-left: 29px; font-size: 27px; line-height: 66px; color: #111; }
.input-currency { line-height: 68px; }
.input-type { box-shadow: 0 2px 10px rgba(245, 50, 70, 0.4); }
.chevron { position: absolute; right: 8px; top: 25px; width: 24px; height: 16px; }
.toggle-field { display: flex; align-items: center; gap: 16px; height: 70px; margin-top: 30px; padding-left: 9px; font-size: 22px; color: #555; }
.toggle { position: relative; width: 70px; height: 30px; background: #4d4d4d; border-radius: 15px; flex: none; }
.toggle-knob { position: absolute; left: 0; top: -2px; width: 34px; height: 34px; border-radius: 50%; background: #fff; border: 2px solid #aaa; }
.modal-buttons { display: flex; justify-content: space-between; padding: 0 31px; margin-top: 29px; }
.modal-btn { width: 238px; height: 63px; background: #fff; border-radius: 8px; font-size: 30px; padding: 0; }
.btn-cancel { border: 2px solid #555; color: #555; }
.btn-submit { border: 2px solid #0a5a96; color: #0a5a96; }
.type-menu { position: absolute; left: 551px; top: 280px; width: 494px; height: 113px; padding-top: 11px; background: rgba(251, 251, 251, 0.82); -webkit-backdrop-filter: blur(4px); backdrop-filter: blur(4px); border-radius: 14px; }
.menu-item { height: 47px; display: flex; align-items: center; padding-left: 15px; font-size: 28px; color: #222; }
.menu-check { width: 28px; font-size: 30px; font-weight: 700; font-family: 'DejaVu Sans', sans-serif; }
.red-frame { position: absolute; left: 531px; top: 243px; width: 560px; height: 168px; border: 7px solid #f53145; box-shadow: 0 0 4px rgba(245, 49, 69, 0.3); }
```
